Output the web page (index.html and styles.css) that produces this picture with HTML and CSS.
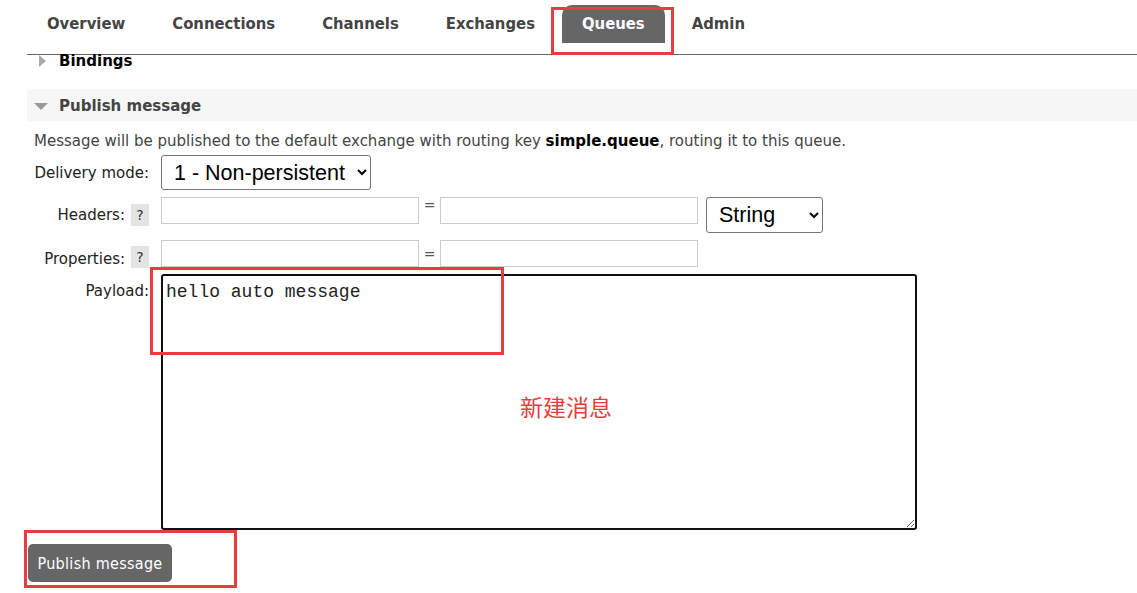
FILE: index.html
```html
<!DOCTYPE html>
<html lang="en">
<head>
    <meta charset="UTF-8">
    <title>Queues - Publish message</title>
    <link rel="stylesheet" href="styles.css">
</head>
<body>
    <div class="page">
        <ul class="tabs">
            <li>Overview</li>
            <li>Connections</li>
            <li>Channels</li>
            <li>Exchanges</li>
            <li class="active">Queues</li>
            <li>Admin</li>
        </ul>

        <div class="section closed">
            <h2><span class="arrow-right"></span>Bindings</h2>
        </div>

        <div class="section open">
            <h2><span class="arrow-down"></span>Publish message</h2>
            <p class="hint">Message will be published to the default exchange with routing key <b>simple.queue</b>, routing it to this queue.</p>

            <form class="publish">
                <label class="row-label" for="delivery">Delivery mode:</label>
                <div class="row-value">
                    <select id="delivery" class="big-select">
                        <option>1 - Non-persistent</option>
                        <option>2 - Persistent</option>
                    </select>
                </div>

                <label class="row-label">Headers: <span class="help">?</span></label>
                <div class="row-value top">
                    <input type="text" class="kv">
                    <span class="eq">=</span>
                    <input type="text" class="kv">
                    <select class="big-select type-select">
                        <option>String</option>
                        <option>Number</option>
                        <option>Boolean</option>
                    </select>
                </div>

                <label class="row-label bottom">Properties: <span class="help">?</span></label>
                <div class="row-value">
                    <input type="text" class="kv">
                    <span class="eq">=</span>
                    <input type="text" class="kv">
                </div>

                <label class="row-label top" for="payload">Payload:</label>
                <div class="row-value">
                    <textarea id="payload">hello auto message</textarea>
                </div>
            </form>

            <button type="button" class="btn">Publish message</button>
        </div>

        <!-- annotations drawn over the screenshot -->
        <div class="mark mark-tab"></div>
        <div class="mark mark-payload"></div>
        <div class="mark mark-button"></div>
        <div class="note">新建消息</div>
    </div>
</body>
</html>
```

FILE: styles.css
```css
body {
    margin: 0;
    font-family: "DejaVu Sans", Verdana, sans-serif;
    font-size: 15px;
    color: #444;
    background: #fff;
}
.page {
    position: relative;
    padding-left: 27px;
    height: 593px;
    box-sizing: border-box;
}
.tabs {
    display: flex;
    gap: 7px;
    margin: 0;
    padding: 5px 0 0 0;
    list-style: none;
    border-bottom: 1px solid #666;
    height: 55px;
    box-sizing: border-box;
}
.tabs li {
    height: 38px;
    line-height: 38px;
    padding: 0 20px;
    font-family: "DejaVu Sans", sans-serif;
    font-stretch: condensed;
    font-weight: bold;
    font-size: 16.5px;
    color: #444;
    border-radius: 10px 10px 0 0;
}
.tabs li.active {
    background: #666;
    color: #fff;
}
.section h2 {
    margin: 0;
    font-size: 15px;
    font-weight: bold;
    display: flex;
    align-items: center;
}
.closed h2 {
    height: 12px;
    line-height: 12px;
    padding-left: 12px;
    color: #000;
}
.open {
    margin-top: 22px;
}
.open h2 {
    height: 32px;
    padding: 2px 0 0 7px;
    box-sizing: border-box;
    background: #f6f6f6;
    color: #444;
}
.arrow-right {
    width: 0;
    height: 0;
    border-top: 6px solid transparent;
    border-bottom: 6px solid transparent;
    border-left: 7px solid #aaa;
    margin-right: 13px;
}
.arrow-down {
    width: 0;
    height: 0;
    border-left: 7px solid transparent;
    border-right: 7px solid transparent;
    border-top: 7px solid #999;
    margin-right: 11px;
}
.hint {
    margin: 10px 0 0 7px;
    line-height: 20px;
}
.hint b {
    color: #000;
}
.publish {
    display: grid;
    grid-template-columns: 115px auto;
    column-gap: 12px;
    row-gap: 7px;
    margin: 4px 0 0 7px;
}
.row-label {
    display: flex;
    align-items: center;
    justify-content: flex-end;
    gap: 6px;
    white-space: nowrap;
    color: #222;
}
.row-label.top {
    align-items: flex-start;
    padding-top: 8px;
}
.row-label.bottom {
    align-items: flex-end;
    margin-bottom: -1px;
}
.row-value {
    display: flex;
    align-items: center;
}
.row-value.top {
    align-items: flex-start;
}
.help {
    display: inline-block;
    width: 18px;
    height: 22px;
    line-height: 22px;
    text-align: center;
    font-size: 14px;
    background: #e4e4e4;
    color: #333;
}
.big-select {
    height: 36px;
    font-family: "Liberation Sans", Arial, sans-serif;
    font-size: 21.5px;
    color: #000;
    background: #fff;
    border: 1px solid #767676;
    border-radius: 3px;
    padding: 0 4px 0 8px;
}
#delivery {
    width: 210px;
    height: 35px;
}
.type-select {
    width: 117px;
    margin-left: 8px;
}
.kv {
    width: 258px;
    height: 27px;
    box-sizing: border-box;
    border: 1px solid #ccc;
    margin: 0;
}
.eq {
    width: 21px;
    text-align: center;
    color: #555;
    font-size: 14px;
}
textarea {
    width: 756px;
    height: 256px;
    box-sizing: border-box;
    border: 2px solid #111;
    border-radius: 3px;
    padding: 6px 3px;
    margin: 0;
    font-family: "Liberation Mono", "Courier New", monospace;
    font-size: 18px;
    color: #222;
    resize: both;
}
.btn {
    display: block;
    margin: 14px 0 0 1px;
    width: 144px;
    height: 38px;
    padding: 0;
    background: #666;
    color: #fff;
    border: none;
    border-radius: 5px;
    font-family: "DejaVu Sans", sans-serif;
    font-stretch: condensed;
    font-size: 16px;
    letter-spacing: 0.3px;
    cursor: pointer;
}
.mark {
    position: absolute;
    border: 3px solid #e53e3e;
    box-sizing: border-box;
}
.mark-tab {
    left: 551px;
    top: 7px;
    width: 123px;
    height: 48px;
}
.mark-payload {
    left: 150px;
    top: 267px;
    width: 354px;
    height: 88px;
}
.mark-button {
    left: 24px;
    top: 530px;
    width: 213px;
    height: 58px;
}
.note {
    position: absolute;
    left: 520px;
    top: 389px;
    font-family: "Noto Sans CJK SC", sans-serif;
    font-size: 23px;
    color: #e53e3e;
}
```
